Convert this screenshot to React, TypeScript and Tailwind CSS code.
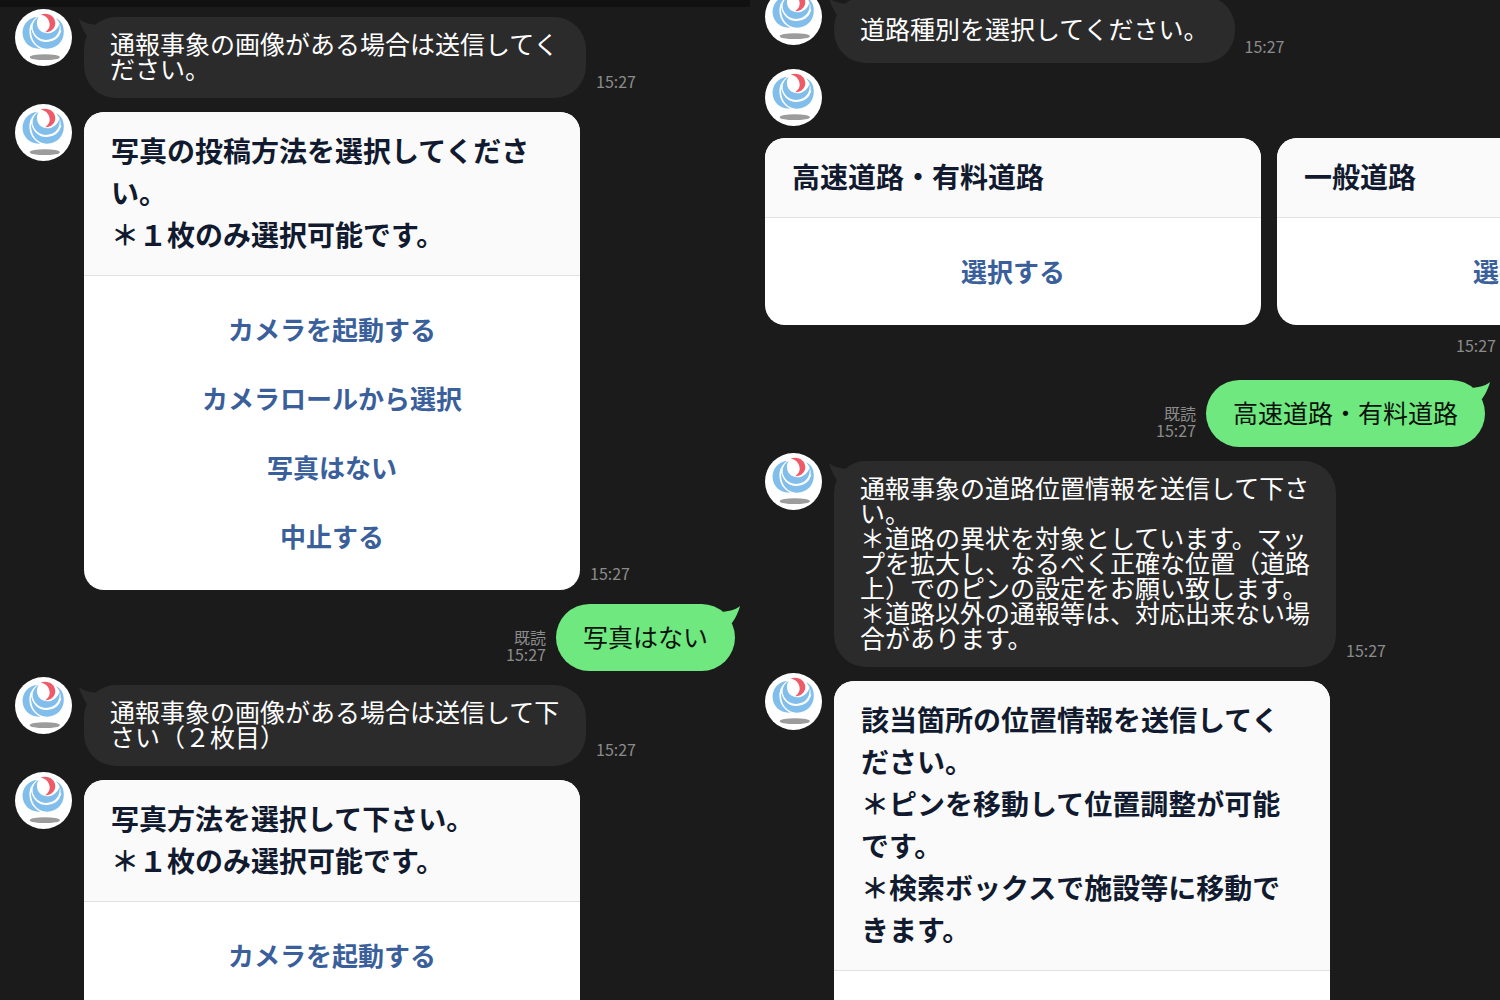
import type { ReactNode } from 'react';

function Avatar() {
  return (
    <svg viewBox="0 0 174 174" className="size-[57px] shrink-0" role="img" aria-label="道路緊急ダイヤル">
      <circle cx="87" cy="87" r="87" fill="#fff" />
      {/* blue crescents */}
      <path d="M68 24 C38 28 23 50 23 74 C24 101 46 123 77 121 C56 111 43 92 44 66 C45 49 54 34 68 24Z" fill="#82beec" />
      <path d="M51 46 C42 86 62 121 98 121 C128 121 149 100 149 69 C149 50 142 36 125 28 C138 41 142 57 138 70 C130 90 115 99 96 99 C69 99 51 76 51 46Z" fill="#82beec" />
      <path d="M72 24 C50 40 50 62 61 77 C73 94 94 98 112 91 C130 83 139 66 136 44 C130 63 116 74 98 74 C80 74 67 60 67 43 C67 36 69 30 72 24Z" fill="#82beec" />
      <path d="M49 48 C52 78 70 99 96 99 C117 99 133 88 140 66" fill="none" stroke="#fff" strokeWidth="4" />
      {/* red crescent */}
      <path d="M77 17 C101 8 123 22 123 43 C123 60 109 72 92 71 C103 63 108 53 105 41 C102 28 92 19 77 17Z" fill="#ee5a68" />
      <ellipse cx="91" cy="147" rx="46" ry="9" fill="#9c9c9c" />
    </svg>
  );
}

function Stamp({ read }: { read?: boolean }) {
  return (
    <div className="shrink-0 pb-2 text-right text-[16px] leading-[17px] text-[#8b8b8b]">
      {read && <p>既読</p>}
      <time className="block">15:27</time>
    </div>
  );
}

// Mensagem recebida: avatar + conteúdo + horário
function Received({ children }: { children: ReactNode }) {
  return (
    <div className="flex gap-3 px-[15px]">
      <Avatar />
      <div className="flex items-end gap-[10px] pt-2">
        {children}
        <Stamp />
      </div>
    </div>
  );
}

function Bubble({ text }: { text: string }) {
  return (
    <div className="relative flex min-h-[67px] max-w-[502px] items-center rounded-[32px] bg-[#2b2b2b] px-[26px] pb-[17px] pt-[14px] text-[25px] leading-[25px] text-white">
      <svg viewBox="0 0 24 24" className="absolute -left-[5px] top-[2px] size-6" aria-hidden="true">
        <path d="M0 0 C3 3 9 5 18 6 L22 20 L8 17 C6 14 2 8 0 0Z" fill="#2b2b2b" />
      </svg>
      <p className="relative whitespace-pre-line">{text}</p>
    </div>
  );
}

function Sent({ text }: { text: string }) {
  return (
    <div className="flex items-end justify-end gap-[10px] px-[15px] pt-2">
      <Stamp read />
      <div className="relative flex min-h-[67px] items-center rounded-[34px] bg-[#6fe97f] px-[27px] pb-[3px] text-[25px] leading-[25px] text-[#0b120c]">
        <svg viewBox="0 0 24 24" className="absolute -right-[5px] top-[2px] size-6" aria-hidden="true">
          <path d="M24 0 C21 3 15 5 6 6 L2 20 L16 17 C18 14 22 8 24 0Z" fill="#6fe97f" />
        </svg>
        <p className="relative">{text}</p>
      </div>
    </div>
  );
}

function Card({ title, options }: { title: string; options: string[] }) {
  return (
    <section className="w-[496px] shrink-0 overflow-hidden rounded-[20px] bg-white">
      <h2 className="whitespace-pre-line border-b border-[#e2e2e2] bg-[#fafafa] px-[27px] pb-5 pt-[17px] text-[28px] font-bold leading-[42px] text-[#111a2e]">
        {title}
      </h2>
      <div className="flex flex-col pb-5 pt-[18px]">
        {options.map((option) => (
          <button key={option} type="button" className="h-[69px] text-[26px] font-bold text-[#3a5f9b]">
            {option}
          </button>
        ))}
      </div>
    </section>
  );
}

export default function App() {
  return (
    <main className="grid h-screen grid-cols-2 overflow-hidden bg-[#1b1b1b] font-['Noto_Sans_CJK_JP',sans-serif]">
      <div className="min-w-0 overflow-hidden">
        <div className="h-[7px] bg-[#111111]" />
        <div className="flex flex-col gap-[6px] pt-[2px]">
          <Received>
            <Bubble text="通報事象の画像がある場合は送信してください。" />
          </Received>
          <Received>
            <Card
              title={'写真の投稿方法を選択してください。\n＊１枚のみ選択可能です。'}
              options={['カメラを起動する', 'カメラロールから選択', '写真はない', '中止する']}
            />
          </Received>
          <Sent text="写真はない" />
          <Received>
            <Bubble text="通報事象の画像がある場合は送信して下さい（２枚目）" />
          </Received>
          <Received>
            <Card
              title={'写真方法を選択して下さい。\n＊１枚のみ選択可能です。'}
              options={['カメラを起動する', 'カメラロールから選択']}
            />
          </Received>
        </div>
      </div>

      <div className="min-w-0 overflow-hidden">
        <div className="-mt-3 flex flex-col gap-[6px]">
          <Received>
            <Bubble text="道路種別を選択してください。" />
          </Received>

          {/* Carrossel de tipos de via */}
          <div className="pb-1">
            <div className="px-[15px] pb-3">
              <Avatar />
            </div>
            <div className="flex gap-4 overflow-hidden pl-[15px]">
              <Card title="高速道路・有料道路" options={['選択する']} />
              <Card title="一般道路" options={['選択する']} />
            </div>
            <div className="flex justify-end pr-1 pt-3">
              <Stamp />
            </div>
          </div>

          <Sent text="高速道路・有料道路" />
          <Received>
            <Bubble
              text={
                '通報事象の道路位置情報を送信して下さい。\n＊道路の異状を対象としています。マップを拡大し、なるべく正確な位置（道路上）でのピンの設定をお願い致します。\n＊道路以外の通報等は、対応出来ない場合があります。'
              }
            />
          </Received>
          <Received>
            <Card
              title={
                '該当箇所の位置情報を送信してください。\n＊ピンを移動して位置調整が可能です。\n＊検索ボックスで施設等に移動できます。'
              }
              options={['位置情報を送信する']}
            />
          </Received>
        </div>
      </div>
    </main>
  );
}
